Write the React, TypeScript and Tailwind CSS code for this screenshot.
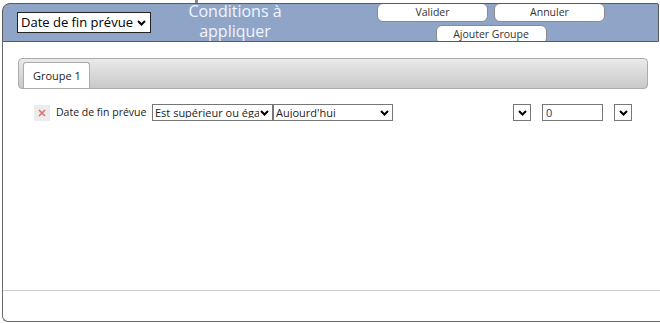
import React from "react";

const Chevron = () => (
  <svg width="9" height="6" viewBox="0 0 9 6" className="shrink-0">
    <path d="M1 1 L4.5 4.5 L8 1" fill="none" stroke="#000" strokeWidth="2" />
  </svg>
);

const FakeSelect = ({ text, className }: { text?: string; className: string }) => (
  <div
    className={`flex items-center border border-[#767676] bg-white text-[11px] leading-none text-[#222] overflow-hidden ${className}`}
  >
    <span className="flex-1 whitespace-nowrap overflow-hidden pl-[2px]">{text}</span>
    <span className="flex items-center pr-[3px] pl-[1px] bg-white">
      <Chevron />
    </span>
  </div>
);

const HeaderButton = ({ label, className = "" }: { label: string; className?: string }) => (
  <div
    className={`w-[111px] h-[19px] flex items-center justify-center bg-white border border-[#8a8a8a] rounded-[6px] text-[10.5px] text-[#333] ${className}`}
  >
    {label}
  </div>
);

const App = () => {
  return (
    <div className="w-[660px] h-[323px] bg-white overflow-hidden" style={{ fontFamily: "'Open Sans', 'Noto Sans', sans-serif" }}>
      <div className="h-[3px] flex">
        <div className="ml-[195px] w-[3px] h-[3px] bg-[#8a8a8a]" />
      </div>

      {/* header */}
      <div className="ml-[2px] w-[657px] h-[39px] bg-[#8fa5c8] border border-[#5a5a5a] rounded-tl-[8px] rounded-tr-[2px] overflow-hidden flex items-start">
        <div className="ml-[14px] mt-[8px] w-[134px] h-[21px] flex items-center border border-[#222] bg-white text-[13px] text-black">
          <span className="flex-1 pl-[3px] whitespace-nowrap leading-none">Date de fin prévue</span>
          <span className="pr-[4px]">
            <Chevron />
          </span>
        </div>
        <div className="ml-[14px] mt-[-3px] w-[140px] text-center text-[16px] leading-[20px] text-[#f2f5fc]">
          Conditions à appliquer
        </div>
        <div className="ml-[72px] mt-[-1px] flex flex-col items-center gap-[3px]">
          <div className="flex gap-[6px]">
            <HeaderButton label="Valider" />
            <HeaderButton label="Annuler" />
          </div>
          <HeaderButton label="Ajouter Groupe" />
        </div>
      </div>

      {/* body */}
      <div className="ml-[2px] w-[670px] h-[280px] border-l border-b border-[#6a6a6a] rounded-bl-[6px] flex flex-col">
        <div className="flex-1">
          <div className="ml-[15px] mt-[16px] w-[630px] h-[31px] border border-[#ababab] rounded-[4px] bg-gradient-to-b from-[#eaeaea] to-[#c9c9c9] flex items-end">
            <div className="ml-[4px] w-[67px] h-[26px] bg-white border border-b-0 border-[#ababab] rounded-t-[3px] text-[11px] text-[#222] pl-[9px] pt-[5px] leading-[15px]">
              Groupe 1
            </div>
          </div>

          <div className="mt-[15px] ml-[31px] flex items-center">
            <div className="w-[16px] h-[16px] bg-[#ececec] flex items-center justify-center">
              <svg width="8" height="8" viewBox="0 0 8 8">
                <path d="M1 1 L7 7 M7 1 L1 7" stroke="#e06a6a" strokeWidth="1.5" />
              </svg>
            </div>
            <span className="ml-[6px] text-[10.5px] text-[#222] whitespace-nowrap w-[96px]">Date de fin prévue</span>
            <FakeSelect text="Est supérieur ou égal" className="w-[121px] h-[17px]" />
            <FakeSelect text="Aujourd'hui" className="w-[120px] h-[17px]" />
            <FakeSelect className="ml-[120px] w-[18px] h-[17px]" />
            <div className="ml-[11px] w-[61px] h-[17px] border border-[#767676] text-[11px] leading-[15px] text-[#336] pl-[3px]">
              0
            </div>
            <FakeSelect className="ml-[11px] w-[18px] h-[17px]" />
          </div>
        </div>
        <div className="h-[31px] border-t border-[#cfcfcf]" />
      </div>
    </div>
  );
};

export default App;
